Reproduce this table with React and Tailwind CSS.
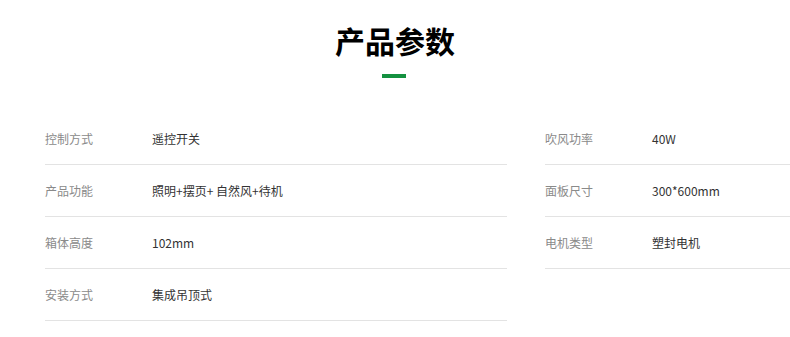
import React from "react";

const left = [
  ["控制方式", "遥控开关"],
  ["产品功能", "照明+摆页+ 自然风+待机"],
  ["箱体高度", "102mm"],
  ["安装方式", "集成吊顶式"],
];
const right = [
  ["吹风功率", "40W"],
  ["面板尺寸", "300*600mm"],
  ["电机类型", "塑封电机"],
];

function Row({ label, value }) {
  return (
    <div className="flex h-[52px] items-center border-b border-[#e3e3e3] text-[12px]">
      <div className="w-[107px] shrink-0 text-[#8a8a8a]">{label}</div>
      <div className="text-[#333333]">{value}</div>
    </div>
  );
}

export default function App() {
  return (
    <div
      className="w-[790px] h-[337px] overflow-hidden bg-white"
      style={{ fontFamily: '"Noto Sans CJK SC", "Noto Sans", sans-serif' }}
    >
      <h1 className="mt-[20px] text-center text-[30px] leading-[40px] font-bold text-black">
        产品参数
      </h1>
      <div className="mx-auto mt-[14px] h-[4px] w-[24px] translate-x-[-1px] bg-[#149140]" />
      <div className="mt-[35px] flex gap-[38px] pl-[45px]">
        <div className="w-[462px] shrink-0">
          {left.map(([l, v]) => (
            <Row key={l} label={l} value={v} />
          ))}
        </div>
        <div className="flex-1">
          {right.map(([l, v]) => (
            <Row key={l} label={l} value={v} />
          ))}
        </div>
      </div>
    </div>
  );
}
